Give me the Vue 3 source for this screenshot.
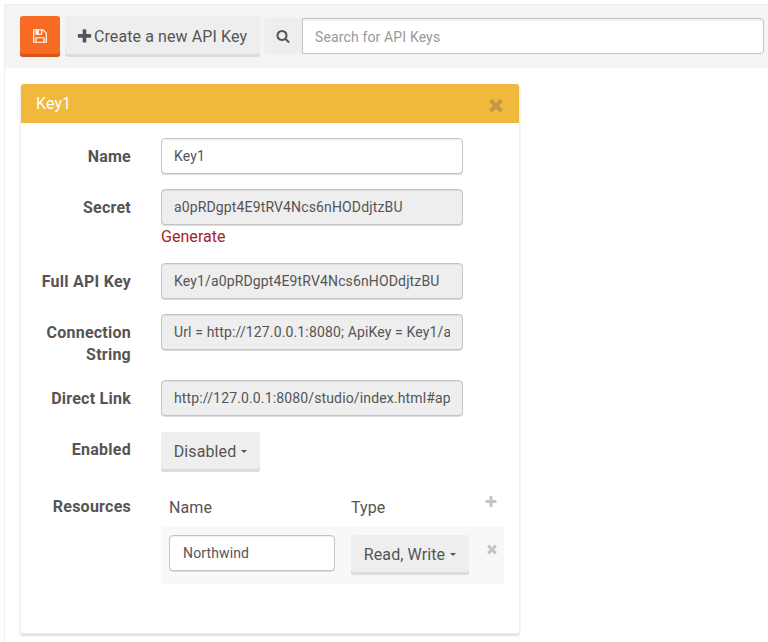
<script setup>
const icons = {
  save: 'M512 1536h768v-384h-768v384zm896 0h128v-896q0-14-10-38.500t-20-34.500l-281-281q-10-10-34-20t-39-10v416q0 40-28 68t-68 28h-576q-40 0-68-28t-28-68v-416h-128v1280h128v-416q0-40 28-68t68-28h832q40 0 68 28t28 68v416zm-384-928v-320q0-13-9.500-22.500t-22.500-9.500h-192q-13 0-22.500 9.500t-9.500 22.500v320q0 13 9.500 22.500t22.500 9.500h192q13 0 22.500-9.500t9.500-22.500zm640 32v928q0 40-28 68t-68 28h-1344q-40 0-68-28t-28-68v-1344q0-40 28-68t68-28h928q40 0 88 20t76 48l280 280q28 28 48 76t20 88z',
  plus: 'M1600 736v192q0 40-28 68t-68 28h-416v416q0 40-28 68t-68 28h-192q-40 0-68-28t-28-68v-416h-416q-40 0-68-28t-28-68v-192q0-40 28-68t68-28h416v-416q0-40 28-68t68-28h192q40 0 68 28t28 68v416h416q40 0 68 28t28 68z',
  search: 'M1216 832q0-185-131.500-316.500t-316.500-131.500-316.500 131.500-131.500 316.500 131.500 316.500 316.500 131.500 316.500-131.500 131.500-316.500zm512 832q0 52-38 90t-90 38q-54 0-90-38l-343-342q-179 124-399 124-143 0-273.500-55.500t-225-150-150-225-55.500-273.500 55.500-273.500 150-225 225-150 273.500-55.500 273.500 55.500 225 150 150 225 55.500 273.500q0 220-124 399l343 343q37 37 37 90z',
  times: 'M1490 1322q0 40-28 68l-136 136q-28 28-68 28t-68-28l-294-294-294 294q-28 28-68 28t-68-28l-136-136q-28-28-28-68t28-68l294-294-294-294q-28-28-28-68t28-68l136-136q28-28 68-28t68 28l294 294 294-294q28-28 68-28t68 28l136 136q28 28 28 68t-28 68l-294 294 294 294q28 28 28 68z'
}
const secret = 'a0pRDgpt4E9tRV4Ncs6nHODdjtzBU'
</script>

<template>
  <div class="page">
    <div class="toolbar">
      <button class="btn save" type="button">
        <svg class="ico-save" viewBox="0 0 1792 1792"><path :d="icons.save" /></svg>
      </button>
      <button class="btn create" type="button">
        <svg class="ico-plus" viewBox="0 0 1792 1792"><path :d="icons.plus" /></svg>
        <span>Create a new API Key</span>
      </button>
      <div class="search">
        <span class="addon">
          <svg class="ico-search" viewBox="0 0 1792 1792"><path :d="icons.search" /></svg>
        </span>
        <input class="search-input" placeholder="Search for API Keys" />
      </div>
    </div>

    <section class="panel">
      <header class="panel-head">
        <span>Key1</span>
        <svg class="ico-close" viewBox="0 0 1792 1792"><path :d="icons.times" /></svg>
      </header>
      <div class="panel-body">
        <div class="row r-name">
          <label>Name</label>
          <input class="field" value="Key1" />
        </div>
        <div class="row r-secret">
          <label>Secret</label>
          <div>
            <input class="field off" readonly :value="secret" />
            <a class="generate">Generate</a>
          </div>
        </div>
        <div class="row r-full">
          <label>Full API Key</label>
          <input class="field off" readonly :value="'Key1/' + secret" />
        </div>
        <div class="row r-conn">
          <label>Connection String</label>
          <input class="field off" readonly :value="'Url = http://127.0.0.1:8080; ApiKey = Key1/' + secret" />
        </div>
        <div class="row r-link">
          <label>Direct Link</label>
          <input class="field off" readonly :value="'http://127.0.0.1:8080/studio/index.html#api-keys/' + secret" />
        </div>
        <div class="row r-enabled">
          <label>Enabled</label>
          <button class="btn drop disabled-btn" type="button">Disabled<i class="caret"></i></button>
        </div>
        <div class="row r-res">
          <label>Resources</label>
          <div class="res">
            <div class="res-head">
              <span class="col-name">Name</span>
              <span class="col-type">Type</span>
              <svg class="ico-add" viewBox="0 0 1792 1792"><path :d="icons.plus" /></svg>
            </div>
            <div class="res-row">
              <input class="field res-input" value="Northwind" />
              <button class="btn drop rw-btn" type="button">Read, Write<i class="caret"></i></button>
              <svg class="ico-del" viewBox="0 0 1792 1792"><path :d="icons.times" /></svg>
            </div>
          </div>
        </div>
      </div>
    </section>
  </div>
</template>

<style>
html, body { margin: 0; background: #fff; }
</style>

<style scoped>
.page {
  box-sizing: border-box;
  height: 638px;
  overflow: hidden;
  margin: 4px 0 0 4px;
  border-left: 1px solid #eeeeee;
  border-top: 1px solid #eeeeee;
  font-family: Roboto, "Liberation Sans", sans-serif;
  color: #555;
}
.toolbar {
  display: flex;
  align-items: flex-start;
  height: 63px;
  box-sizing: border-box;
  padding: 11px 4px 0 15px;
  background: #f4f4f4;
}
.btn {
  box-sizing: border-box;
  border: 0;
  border-radius: 3px;
  font: 400 16px Roboto, "Liberation Sans", sans-serif;
  letter-spacing: 0.1px;
  color: #555;
  background: #eeeeee;
  box-shadow: inset 0 -3px 0 #dddddd;
  padding: 0;
}
.save {
  width: 40px;
  height: 41px;
  background: #f76b24;
  box-shadow: inset 0 -3px 0 #d9541a;
  display: flex;
  align-items: center;
  justify-content: center;
  padding-bottom: 1px;
}
.ico-save { width: 16px; height: 16px; fill: #fff; }
.create {
  width: 195px;
  height: 41px;
  margin-left: 5px;
  display: flex;
  align-items: center;
  justify-content: center;
  gap: 1px;
  padding: 0 2px 1px 0;
}
.ico-plus { width: 17px; height: 17px; fill: #555; }
.search {
  display: flex;
  flex: 1;
  margin: 2px 0 0 4px;
}
.addon {
  width: 38px;
  height: 36px;
  display: flex;
  align-items: center;
  justify-content: center;
  background: #eeeeee;
  border-radius: 3px 0 0 3px;
}
.ico-search { width: 14px; height: 14px; fill: #555; }
.search-input {
  flex: 1;
  min-width: 0;
  box-sizing: border-box;
  height: 36px;
  padding: 2px 12px 0;
  border: 1px solid #c4c4c4;
  border-radius: 0 4px 4px 0;
  box-shadow: inset 0 2px 1px rgba(0, 0, 0, 0.06);
  background: #fff;
  font: 14px Roboto, "Liberation Sans", sans-serif;
  letter-spacing: 0.14px;
  color: #555;
  outline: 0;
}
.search-input::placeholder { color: #999; opacity: 1; }

.panel {
  box-sizing: border-box;
  width: 500px;
  height: 550px;
  margin: 16px 0 0 15px;
  border: 1px solid #eeeeee;
  border-top: 0;
  border-radius: 3px;
  box-shadow: 0 2px 2px rgba(0, 0, 0, 0.12);
  background: #fff;
}
.panel-head {
  display: flex;
  align-items: center;
  justify-content: space-between;
  height: 39px;
  padding: 0 15px;
  background: #f0b83c;
  border-radius: 3px 3px 0 0;
  color: #fff;
  font-size: 16px;
  letter-spacing: 0.1px;
}
.ico-close { width: 20px; height: 20px; fill: #c09a45; margin: 3px -2px 0 0; }
.panel-body { padding: 15px 0 0; }
.row { display: flex; }
.row label {
  box-sizing: border-box;
  width: 110px;
  margin: 8px 30px 0 0;
  flex: none;
  text-align: right;
  font-size: 16px;
  line-height: 22px;
  font-weight: 700;
  letter-spacing: 0.25px;
  color: #555;
}
.field {
  display: block;
  box-sizing: border-box;
  width: 302px;
  height: 36px;
  padding: 0 12px;
  border: 1px solid #c4c4c4;
  border-radius: 4px;
  box-shadow: inset 0 1px 1px rgba(0, 0, 0, 0.07), 0 1px 0 #dddddd;
  background: #fff;
  font: 14px Roboto, "Liberation Sans", sans-serif;
  letter-spacing: 0.14px;
  color: #555;
  outline: 0;
}
.off { background: #eeeeee; }
.generate {
  display: block;
  margin-top: 2px;
  font-size: 16px;
  line-height: 20px;
  letter-spacing: 0.05px;
  color: #a51d2d;
}
.r-secret { margin-top: 15px; }
.r-full { margin-top: 16px; }
.r-conn { margin-top: 15px; }
.r-link { margin-top: 14px; }
.r-enabled { margin-top: 16px; }
.r-enabled label { margin-top: 7px; }
.r-res { margin-top: 23px; }
.r-res label { margin-top: 1px; }
.drop {
  display: flex;
  align-items: center;
  justify-content: center;
  padding-bottom: 1px;
}
.disabled-btn { width: 99px; height: 40px; }
.caret {
  display: inline-block;
  width: 0;
  height: 0;
  margin-left: 5px;
  border-top: 3px solid #555;
  border-left: 3px solid transparent;
  border-right: 3px solid transparent;
}
.res { width: 343px; }
.res-head {
  position: relative;
  display: flex;
  height: 32px;
  padding-left: 8px;
  line-height: 22px;
  font-size: 16px;
  letter-spacing: 0.1px;
}
.col-name { width: 182px; margin-top: 2px; }
.col-type { margin-top: 2px; }
.ico-add {
  position: absolute;
  right: 6px;
  top: 0;
  width: 14px;
  height: 14px;
  fill: #c4c4c4;
}
.res-row {
  position: relative;
  display: flex;
  align-items: flex-start;
  height: 57px;
  box-sizing: border-box;
  padding: 8px 0 0 8px;
  background: #f8f8f8;
}
.res-input { width: 166px; padding-left: 13px; }
.rw-btn { width: 118px; height: 40px; margin-left: 16px; }
.ico-del {
  position: absolute;
  right: 5px;
  top: 15px;
  width: 14px;
  height: 14px;
  fill: #c4c4c4;
}
</style>
